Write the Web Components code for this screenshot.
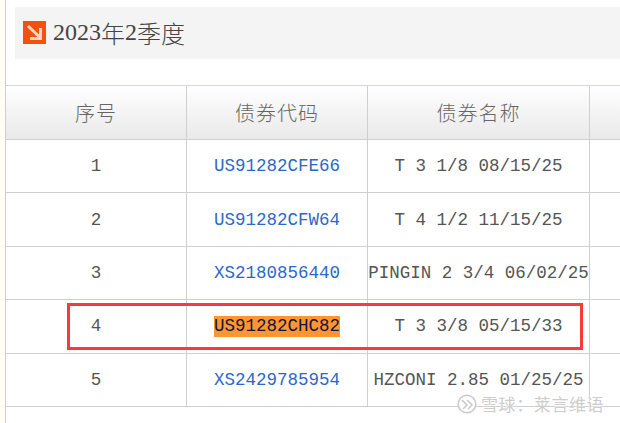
<!DOCTYPE html>
<html lang="zh">
<head>
<meta charset="utf-8">
<style>
  html, body { margin: 0; height: 100%; overflow: hidden; background: #fffdf6; }
</style>
</head>
<body>
<bond-page>
  <quarter-heading>2023年2季度</quarter-heading>
  <bond-table>
    <bond-row head><span>序号</span><span>债券代码</span><span>债券名称</span><span></span></bond-row>
    <bond-row><span>1</span><a>US91282CFE66</a><span>T 3 1/8 08/15/25</span><span></span></bond-row>
    <bond-row><span>2</span><a>US91282CFW64</a><span>T 4 1/2 11/15/25</span><span></span></bond-row>
    <bond-row><span>3</span><a>XS2180856440</a><span>PINGIN 2 3/4 06/02/25</span><span></span></bond-row>
    <bond-row><span>4</span><a mark>US91282CHC82</a><span>T 3 3/8 05/15/33</span><span></span></bond-row>
    <bond-row><span>5</span><a>XS2429785954</a><span>HZCONI 2.85 01/25/25</span><span></span></bond-row>
  </bond-table>
  <red-frame></red-frame>
  <snow-mark>雪球：莱言维语</snow-mark>
</bond-page>

<script>
class BondPage extends HTMLElement {
  constructor() {
    super();
    this.attachShadow({ mode: "open" });
    this.shadowRoot.innerHTML = `
      <style>
        :host {
          display: block;
          position: relative;
          box-sizing: border-box;
          width: 620px;
          height: 423px;
          margin-left: 5px;
          padding-top: 7px;
          border-left: 1px solid #cfcfcf;
          background: #fff;
          overflow: hidden;
        }
      </style>
      <slot></slot>
    `;
  }
}

class QuarterHeading extends HTMLElement {
  constructor() {
    super();
    this.attachShadow({ mode: "open" });
    this.shadowRoot.innerHTML = `
      <style>
        :host {
          display: flex;
          align-items: center;
          gap: 7px;
          height: 52px;
          margin: 0 0 26px 9px;
          padding-left: 8px;
          background: #f4f4f4;
          color: #444;
          font: 24px "Noto Sans CJK SC", sans-serif;
        }
        svg { flex: none; margin-top: -2px; }
        .latin { font: 24px "Liberation Serif", serif; }
        .title { display: flex; align-items: center; line-height: 1; margin-top: -1px; }
        .title span { display: block; }
        .cjk { font-weight: 300; }
      </style>
      <svg width="23" height="23" viewBox="0 0 23 23">
        <rect width="23" height="23" fill="#f4500f"/>
        <path d="M5 5 L16 15.5 M7 17.5 H17.5 V7" fill="none" stroke="#ffd9c4" stroke-width="3"/>
      </svg>
      <div class="title">
        <span class="latin">2023</span><span class="cjk">年</span><span class="latin">2</span><span class="cjk">季度</span>
      </div>
    `;
  }
}

class BondTable extends HTMLElement {
  constructor() {
    super();
    this.attachShadow({ mode: "open" });
    this.shadowRoot.innerHTML = `
      <style>
        :host {
          display: block;
          border-top: 1px solid #ced6e0;
        }
      </style>
      <slot></slot>
    `;
  }
}

class BondRow extends HTMLElement {
  constructor() {
    super();
    this.attachShadow({ mode: "open" });
    this.shadowRoot.innerHTML = `
      <style>
        :host {
          display: grid;
          grid-template-columns: 181px 181px 222px 1fr;
          box-sizing: border-box;
          height: 53.4px;
          border-bottom: 1px solid #cfcfcf;
          color: #555;
          font: 17.5px "Liberation Mono", monospace;
          white-space: nowrap;
        }
        :host([head]) {
          height: 54px;
          border-bottom-width: 1px;
          background: linear-gradient(#ffffff, #e9e9e9);
          color: #666;
          font: 300 20px "Noto Sans CJK SC", sans-serif;
          letter-spacing: 1px;
        }
        ::slotted(*) {
          display: flex;
          align-items: center;
          justify-content: center;
          box-sizing: border-box;
          border-right: 1px solid #cfcfcf;
          min-width: 0;
        }
        ::slotted(:last-child) { border-right: 0; }
        ::slotted(a) { color: #2b68c9; }
        ::slotted(a[mark]) {
          color: #14143c;
          background: linear-gradient(#ff9631, #ff9631) center / 126px 21px no-repeat;
        }
      </style>
      <slot></slot>
    `;
  }
}

class RedFrame extends HTMLElement {
  constructor() {
    super();
    this.attachShadow({ mode: "open" });
    this.shadowRoot.innerHTML = `
      <style>
        :host {
          position: absolute;
          left: 61px;
          top: 303px;
          width: 516px;
          height: 47px;
          box-sizing: border-box;
          border: 3px solid #f93a3c;
        }
      </style>
    `;
  }
}

class SnowMark extends HTMLElement {
  constructor() {
    super();
    this.attachShadow({ mode: "open" });
    this.shadowRoot.innerHTML = `
      <style>
        :host {
          position: absolute;
          left: 451px;
          top: 394px;
          display: flex;
          align-items: center;
          gap: 4px;
          color: #cdcdcd;
          font: 17px/20px "Noto Sans CJK SC", sans-serif;
          letter-spacing: 0.6px;
          white-space: nowrap;
          text-shadow: 0 0 2px #fff, 0 0 2px #fff;
        }
        svg { flex: none; }
      </style>
      <svg width="20" height="20" viewBox="0 0 20 20" fill="none" stroke="#c8c8c8" stroke-width="1.5">
        <circle cx="10" cy="10" r="8.8" fill="#fff"/>
        <path d="M5 6 L10 11 L6 15 M10 6 L15 11 L11 15"/>
      </svg>
      <slot></slot>
    `;
  }
}

customElements.define("bond-page", BondPage);
customElements.define("quarter-heading", QuarterHeading);
customElements.define("bond-table", BondTable);
customElements.define("bond-row", BondRow);
customElements.define("red-frame", RedFrame);
customElements.define("snow-mark", SnowMark);
</script>
</body>
</html>
